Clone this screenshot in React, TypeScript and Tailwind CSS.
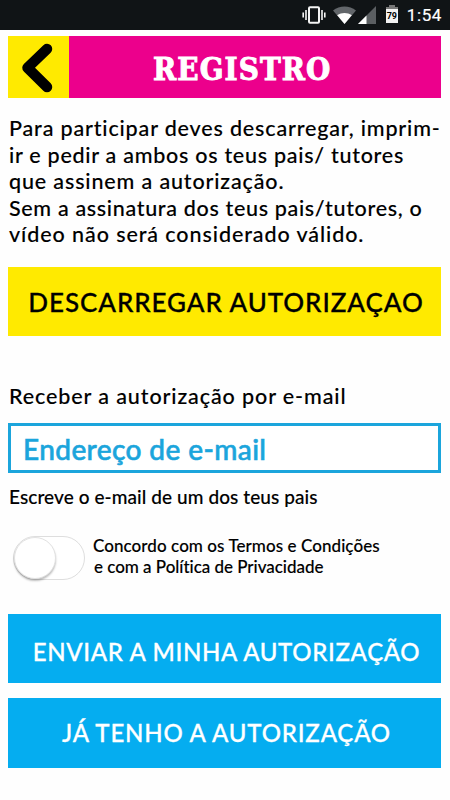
import React, { useState } from 'react';

const intro = [
  { text: 'Para participar deves descarregar, imprim-', spacing: 'tracking-[0.84px]' },
  { text: 'ir e pedir a ambos os teus pais/ tutores', spacing: 'tracking-[0.73px]' },
  { text: 'que assinem a autorização.', spacing: 'tracking-[0.86px]' },
  { text: 'Sem a assinatura dos teus pais/tutores, o', spacing: 'tracking-[0.67px]' },
  { text: 'vídeo não será considerado válido.', spacing: 'tracking-[0.92px]' },
];

function StatusBar() {
  return (
    <div className="h-[30px] bg-[#101416] flex items-center justify-end pr-[8px] text-white">
      <svg width="24" height="18" viewBox="0 0 24 18" fill="none" stroke="#f4f4f4" className="mr-[7px]">
        <rect x="7" y="1.2" width="10" height="15.6" rx="1" strokeWidth="2" />
        <path d="M4 4v10M20 4v10M1.2 6.5v5M22.8 6.5v5" strokeWidth="1.6" />
      </svg>
      <svg width="23" height="18" viewBox="0 0 23 18" className="mr-[2px]">
        <path d="M0 4.5C6.5-1 16.5-1 23 4.5L11.5 18z" fill="#62666a" />
        <path d="M4.2 9.3c4.5-3.2 10.1-3.2 14.6 0L11.5 18z" fill="#fff" />
      </svg>
      <svg width="18" height="18" viewBox="0 0 18 18" className="mr-[10px]">
        <path d="M18 0v18H0z" fill="#5b5f62" />
        <path d="M8.5 9.5V18H0z" fill="#fff" />
      </svg>
      <div className="mr-[9px] -mt-[2px] flex flex-col items-center">
        <div className="w-[6px] h-[2px] bg-[#777]" />
        <div className="w-[12px] h-[2px] bg-[#777]" />
        <div className="w-[12px] h-[14px] bg-[#f2f2f2] flex items-center justify-center font-['Roboto'] text-[9px] leading-none font-bold text-black [-webkit-text-stroke:0px]">79</div>
      </div>
      <span className="pt-[1px] font-['Roboto'] text-[17px] leading-none font-normal tracking-[0.6px] [-webkit-text-stroke:0.2px]">1:54</span>
    </div>
  );
}

export default function App() {
  const [accepted, setAccepted] = useState(false);
  const [email, setEmail] = useState('');

  return (
    <div className="w-[450px] h-[800px] overflow-hidden bg-[#fefefe] font-['Lato',sans-serif] font-medium text-black [-webkit-text-stroke:0.12px]">
      <StatusBar />

      <main className="pt-[6px] pl-[8px] pr-[9px] flex flex-col">
        {/* Header */}
        <header className="h-[62px] flex bg-[#ec008c]">
          <button className="w-[61px] h-full bg-[#ffea00] flex items-center justify-center" aria-label="Voltar">
            <svg width="61" height="62" viewBox="0 0 61 62" fill="none" stroke="#000" strokeWidth="10.5" strokeLinecap="round" strokeLinejoin="round">
              <path d="M39 13L19.5 31.7L39 51" />
            </svg>
          </button>
          <h1 className="flex-1 pl-[84px] pt-[14px] whitespace-nowrap font-['DejaVu_Serif_Condensed','DejaVu_Serif',serif] font-bold text-[31px] leading-[38px] tracking-[1.1px] text-white [-webkit-text-stroke:0.9px]">
            REGISTRO
          </h1>
        </header>

        <div className="mt-[17px] pl-[1px] text-[21.5px] leading-[26.5px] whitespace-nowrap">
          {intro.map((line) => (
            <p key={line.text} className={line.spacing}>{line.text}</p>
          ))}
        </div>

        <button className="mt-[19px] h-[69px] bg-[#ffea00] text-[26px] tracking-[0.93px] whitespace-nowrap flex items-center justify-center pt-[2px] pl-[3px] [-webkit-text-stroke:0.3px]">
          DESCARREGAR AUTORIZAÇAO
        </button>

        {/* E-mail */}
        <label className="mt-[46px] pl-[1px] text-[21.5px] leading-[28px] tracking-[0.9px]">Receber a autorização por e-mail</label>
        <input
          value={email}
          onChange={(e) => setEmail(e.target.value)}
          placeholder="Endereço de e-mail"
          className="mt-[13px] h-[50px] w-full border-[3px] border-[#1ba5dc] bg-white pl-[12px] pt-[2px] text-[28px] tracking-[0.4px] text-[#1ba5dc] placeholder:text-[#1ba5dc] placeholder:opacity-100 outline-none [-webkit-text-stroke:0.6px]"
        />
        <p className="mt-[12px] pl-[1px] text-[19px] leading-[24px] tracking-[0.08px]">Escreve o e-mail de um dos teus pais</p>

        <div className="mt-[27px] h-[44px] pl-[5px] flex">
          <button
            role="switch"
            aria-checked={accepted}
            onClick={() => setAccepted(!accepted)}
            className={`w-[72px] h-[44px] rounded-full border border-[#dedede] flex items-center ${accepted ? 'bg-[#05adf0] justify-end' : 'bg-white'}`}
          >
            <span className="w-[42px] h-[42px] rounded-full bg-white border border-[#e2e2e2] shadow-[0_2px_2px_rgba(0,0,0,0.25)]" />
          </button>
          <div className="ml-[8px] -mt-[1px] text-[17px] leading-[21px] whitespace-nowrap">
            <p className="tracking-[0.07px]">Concordo com os Termos e Condições</p>
            <p className="pl-[1px] tracking-[-0.03px]">e com a Política de Privacidade</p>
          </div>
        </div>

        <button className="mt-[34px] h-[69px] bg-[#05adf0] text-white text-[24px] tracking-[0.66px] whitespace-nowrap flex items-center justify-center pt-[7px] pl-[4px] [-webkit-text-stroke:0.3px]">
          ENVIAR A MINHA AUTORIZAÇÃO
        </button>
        <button className="mt-[15px] h-[70px] bg-[#05adf0] text-white text-[24px] tracking-[0.82px] whitespace-nowrap flex items-center justify-center pl-[4px] [-webkit-text-stroke:0.3px]">
          JÁ TENHO A AUTORIZAÇÃO
        </button>
      </main>
    </div>
  );
}
